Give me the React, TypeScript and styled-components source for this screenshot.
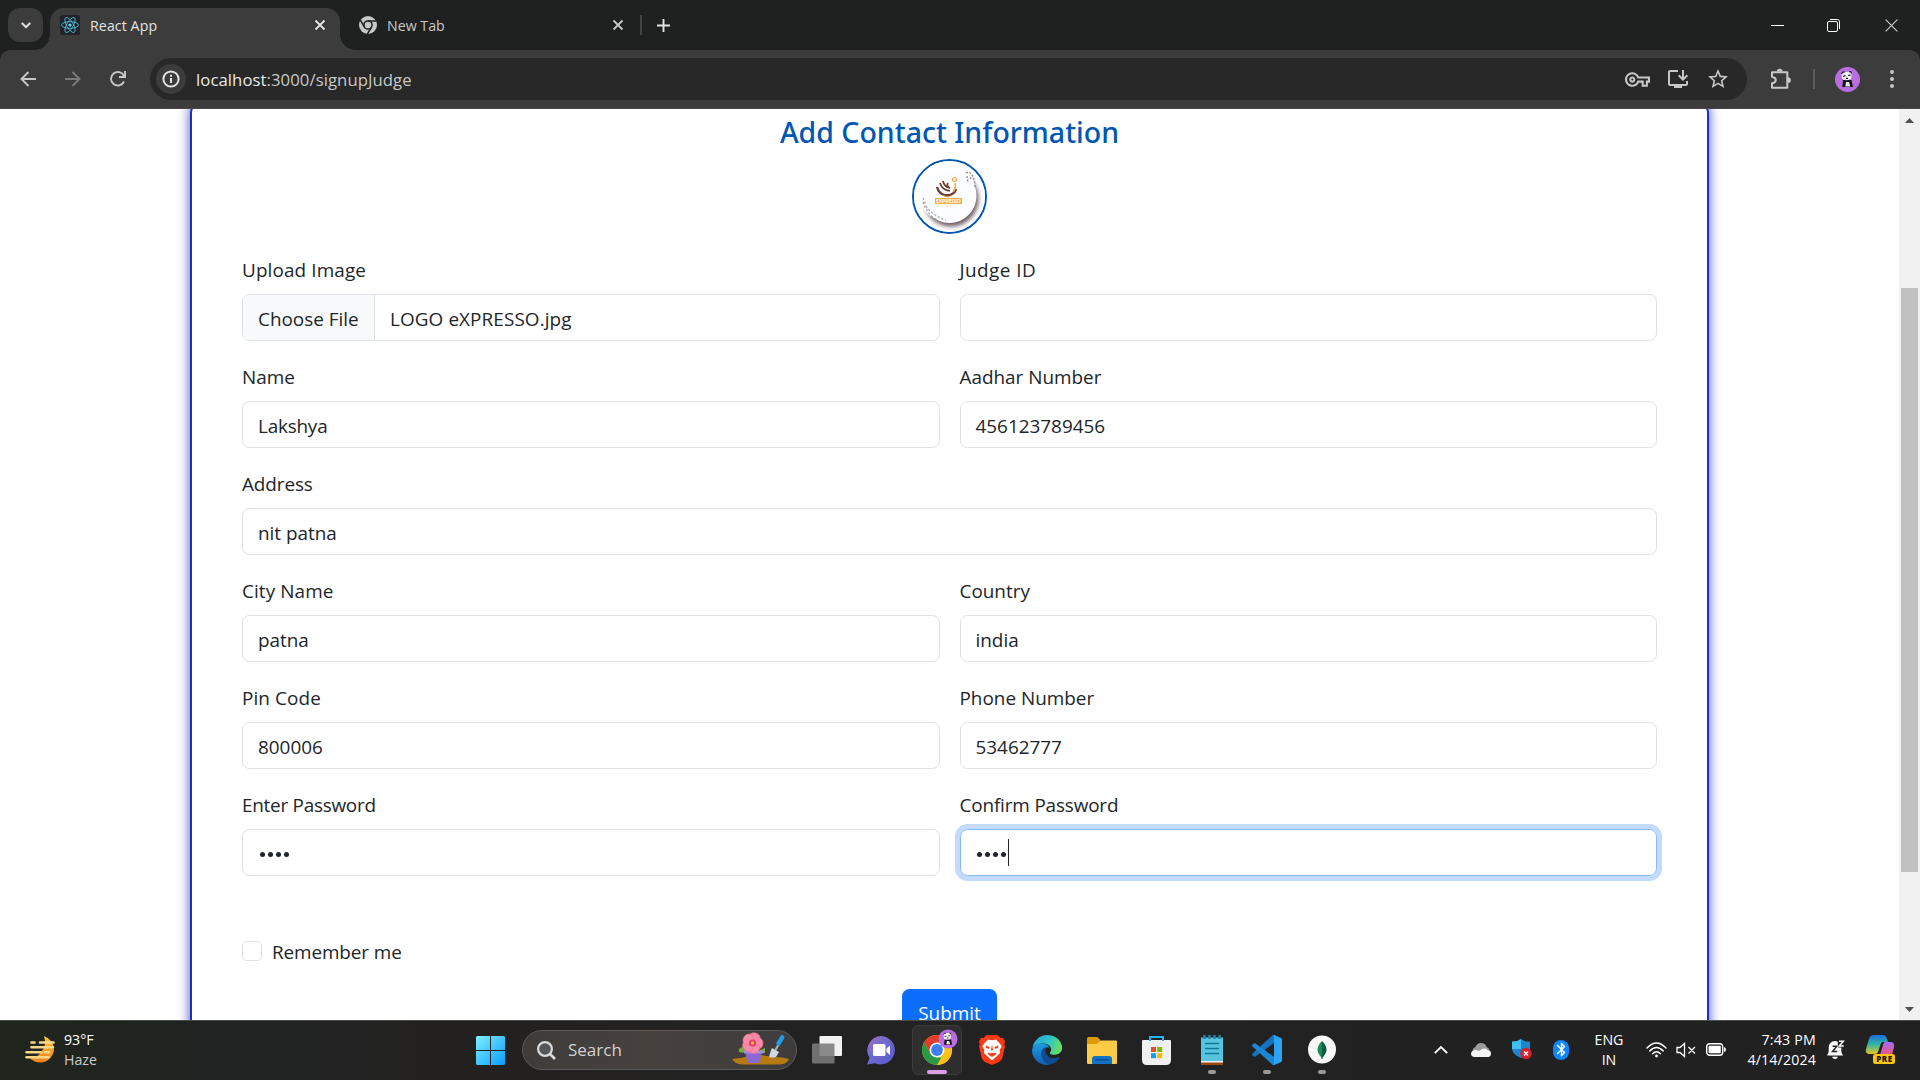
import React from "react";
import styled, { createGlobalStyle } from "styled-components";
import {
  MdOutlineVpnKey,
  MdOutlineInstallDesktop,
  MdStarBorder,
  MdBluetooth,
} from "react-icons/md";

const Global = createGlobalStyle`
  * { box-sizing: border-box; }
  body { margin: 0; overflow: hidden; font-family: "Open Sans", "Noto Sans", sans-serif; }
  svg { display: block; flex: none; overflow: visible; }
`;

const Screen = styled.div`
  width: 1920px;
  height: 1080px;
  display: flex;
  flex-direction: column;
  overflow: hidden;
  background: #fff;
`;

const Text = styled.span<{ $ls?: number }>`
  white-space: nowrap;
  letter-spacing: ${(p) => p.$ls ?? 0}px;
`;

/* ---------- browser tab strip ---------- */

const TabStrip = styled.div`
  height: 50px;
  flex: none;
  display: flex;
  align-items: flex-end;
  background: #1f2120;
  padding-left: 8px;
  color: #c7c7c7;
  font-size: 14.2px;
`;

const TabSearch = styled.div`
  width: 35px;
  height: 34px;
  margin-bottom: 8px;
  border-radius: 12px;
  background: #3c3c3c;
  display: grid;
  place-items: center;
  color: #e3e3e3;
`;

const Flare = styled.div<{ $side: "left" | "right" }>`
  width: 15px;
  height: 15px;
  margin-left: ${(p) => (p.$side === "left" ? -8 : 0)}px;
  background: radial-gradient(
    circle at ${(p) => (p.$side === "left" ? "0 0" : "100% 0")},
    transparent 14.5px,
    #3c3c3c 15px
  );
`;

const Tab = styled.div<{ $active?: boolean; $width: number }>`
  width: ${(p) => p.$width}px;
  height: 42px;
  padding: 0 ${(p) => (p.$active ? 15 : 8.5)}px 8px ${(p) => (p.$active ? 10 : 4)}px;
  border-radius: 14px 14px 0 0;
  background: ${(p) => (p.$active ? "#3c3c3c" : "transparent")};
  color: ${(p) => (p.$active ? "#e3e3e3" : "#c7c7c7")};
  display: flex;
  align-items: center;
  gap: 10px;
`;

const TabTitle = styled(Text)`
  flex: 1;
`;

const Favicon = styled.div`
  width: 20px;
  height: 20px;
  border-radius: 2px;
  background: #20232a;
  display: grid;
  place-items: center;
`;

const StripDivider = styled.div`
  width: 2px;
  height: 20px;
  margin: 0 15px 15px 9px;
  background: #444;
`;

const NewTab = styled.div`
  margin-bottom: 18.5px;
`;

const WindowControls = styled.div`
  margin-left: auto;
  height: 49px;
  display: flex;
  align-items: center;
  gap: 43px;
  padding-right: 22px;
`;

const CloseWindow = styled.div`
  margin-left: 2px;
`;

/* ---------- browser toolbar ---------- */

const ToolbarBack = styled.div`
  flex: none;
  background: #1f2120;
`;

const Toolbar = styled.div`
  height: 59px;
  background: #3c3c3c;
  border-radius: 10px 10px 0 0;
  border-bottom: 1px solid #4a4548;
  display: flex;
  align-items: center;
  color: #c7c7c7;
`;

const NavButtons = styled.div`
  width: 150px;
  display: flex;
  gap: 29px;
  padding-left: 20px;
`;

const UrlBar = styled.div`
  width: 1597px;
  height: 42px;
  border-radius: 21px;
  background: #282828;
  display: flex;
  align-items: center;
  padding: 0 17px 0 6px;
  font-size: 16.7px;
`;

const InfoBadge = styled.div`
  width: 30px;
  height: 30px;
  border-radius: 50%;
  background: #3c3c3c;
  display: grid;
  place-items: center;
  margin-right: 10px;
`;

const Host = styled.span`
  color: #e8e8e8;
`;

const UrlActions = styled.div`
  margin-left: auto;
  display: flex;
  align-items: center;
  gap: 16px;
`;

const ToolbarEnd = styled.div`
  flex: 1;
  display: flex;
  align-items: center;
  padding-left: 23px;
`;

const ToolDivider = styled.div`
  width: 2px;
  height: 20px;
  margin: 0 20px 0 21px;
  background: #5c5c5c;
`;

const MenuDots = styled.div`
  margin-left: 29px;
`;

/* ---------- page ---------- */

const Viewport = styled.div`
  height: 911px;
  flex: none;
  display: flex;
  overflow: hidden;
`;

const Page = styled.main`
  flex: 1;
  height: 911px;
  overflow: hidden;
  background: #fff;
  padding-left: 190px;
`;

const Card = styled.section`
  width: 1519px;
  height: 1000px;
  margin-top: -8px;
  padding: 12px 50px;
  border: 2px solid #1f2fb8;
  border-radius: 12px;
  box-shadow: 0 0 12px rgba(31, 47, 184, 0.85);
  display: flex;
  flex-direction: column;
  align-items: center;
  color: #212529;
  font-size: 18.9px;
  line-height: 30px;
`;

const Heading = styled.h1`
  margin: -1px 0 9px;
  font-family: "Noto Sans", "Open Sans", sans-serif;
  font-size: 28.5px;
  font-weight: 500;
  line-height: 36px;
  color: #0056b3;
  white-space: nowrap;
`;

const Avatar = styled.div`
  width: 75px;
  height: 75px;
  flex: none;
  border: 2px solid #0056b3;
  border-radius: 50%;
  overflow: hidden;
`;

const Grid = styled.div`
  width: 1415px;
  margin-top: 20px;
  display: grid;
  grid-template-columns: 1fr 1fr;
  gap: 20px;
`;

const Field = styled.div<{ $wide?: boolean }>`
  grid-column: ${(p) => (p.$wide ? "1 / -1" : "auto")};
  display: flex;
  flex-direction: column;
  gap: 9px;
  padding-top: 1px;
`;

const Control = styled.div<{ $focus?: boolean }>`
  height: 47px;
  border: 1px solid ${(p) => (p.$focus ? "#86b7fe" : "#dee2e6")};
  border-radius: 7.5px;
  box-shadow: ${(p) => (p.$focus ? "0 0 0 5px rgba(13,110,253,.25)" : "none")};
  padding: 2px 15px 0;
  display: flex;
  align-items: center;
  overflow: ${(p) => (p.$focus ? "visible" : "hidden")};
`;

const FileButton = styled.div`
  height: 49px;
  margin: -2px 15px 0 -15px;
  padding: 11px 15px 0;
  width: 132px;
  background: #f8f9fa;
  border-right: 1px solid #dee2e6;
`;

const Dots = styled.div`
  display: flex;
  gap: 3px;
  padding: 1px 1.5px 0 1.5px;
`;

const Dot = styled.i`
  width: 5px;
  height: 5px;
  border-radius: 50%;
  background: #212529;
`;

const Caret = styled.i`
  width: 1px;
  height: 27px;
  background: #212529;
  margin-bottom: 3px;
`;

const Remember = styled.div`
  width: 1415px;
  margin-top: 60px;
  display: flex;
  align-items: center;
  gap: 10px;
`;

const RememberLabel = styled(Text)`
  padding-top: 1px;
  margin-bottom: -1px;
`;

const Checkbox = styled.div`
  width: 20px;
  height: 20px;
  border: 1px solid #dee2e6;
  border-radius: 5px;
`;

const Submit = styled.div`
  width: 95px;
  height: 47px;
  margin-top: 23px;
  border-radius: 7.5px;
  background: #0d6efd;
  color: #fff;
  text-align: center;
  line-height: 49px;
`;

const Scrollbar = styled.div`
  width: 21px;
  background: #f1f1f1;
  display: flex;
  flex-direction: column;
  align-items: center;
  padding: 9px 0 8px;
`;

const Thumb = styled.div`
  width: 17px;
  height: 584px;
  margin: 165px 0 auto;
  background: #c1c1c1;
`;

/* ---------- taskbar ---------- */

const Taskbar = styled.footer`
  height: 60px;
  flex: none;
  border-top: 1px solid #4a4c4a;
  background: linear-gradient(90deg, #20251d 0, #202322 240px, #232120 480px, #222 800px, #212121 100%);
  display: flex;
  align-items: flex-start;
  color: #fff;
  font-size: 14.2px;
  line-height: 20px;
`;

const Weather = styled.div`
  width: 463px;
  height: 57px;
  padding-left: 25px;
  display: flex;
  gap: 9px;
  align-items: center;
`;

const Stack = styled.div<{ $align?: string }>`
  display: flex;
  flex-direction: column;
  align-items: ${(p) => p.$align ?? "flex-start"};
`;

const Muted = styled(Text)`
  color: #c9c9c9;
`;

const Slot = styled.div<{ $w?: number; $end?: boolean }>`
  width: ${(p) => p.$w ?? 55}px;
  height: ${(p) => (p.$w ? 57 : 58)}px;
  flex: none;
  display: grid;
  align-items: center;
  justify-items: ${(p) => (p.$end ? "end" : "center")};
  padding-right: ${(p) => (p.$end ? 5 : 0)}px;
`;

const SearchPill = styled.div`
  width: 275px;
  height: 40px;
  margin: 9px 2px 0 4px;
  border: 1px solid #5c5a58;
  border-radius: 20px;
  background: linear-gradient(90deg, #3e3c3a, #47413e 45%, #3e3d3c);
  display: flex;
  align-items: center;
  padding: 0 7px 0 14px;
  font-size: 17px;
  color: #d2d2d2;
`;

const SearchLabel = styled(Text)`
  margin-left: 12px;
  flex: 1;
`;

const AppTile = styled.div<{ $active?: boolean }>`
  width: 50px;
  height: 50px;
  border-radius: 6px;
  border: 1px solid ${(p) => (p.$active ? "#3c3c3c" : "transparent")};
  background: ${(p) => (p.$active ? "#2f2e2e" : "transparent")};
  display: flex;
  flex-direction: column;
  align-items: center;
  padding-top: 9px;
`;

const Indicator = styled.div<{ $active?: boolean }>`
  width: ${(p) => (p.$active ? 20 : 8)}px;
  height: 4px;
  border-radius: 2px;
  margin-top: 5px;
  background: ${(p) => (p.$active ? "#dc9fe6" : "#9a9a9a")};
`;

const Tray = styled.div`
  margin-left: auto;
  padding-right: 10px;
  display: flex;
`;

/* ---------- drawings ---------- */

const Cross = ({ size = 10, w = 1.8 }: { size?: number; w?: number }) => (
  <svg width={size} height={size} viewBox="0 0 10 10" stroke="currentColor" strokeWidth={w} fill="none">
    <path d="M.5.5l9 9M9.5.5l-9 9" />
  </svg>
);

const ReactLogo = () => (
  <svg width="18" height="18" viewBox="-12 -12 24 24" fill="none" stroke="#53c1de" strokeWidth="1.1">
    <circle r="2.1" fill="#61dafb" stroke="none" />
    <ellipse rx="11.3" ry="4.4" />
    <ellipse rx="11.3" ry="4.4" transform="rotate(60)" />
    <ellipse rx="11.3" ry="4.4" transform="rotate(120)" />
  </svg>
);

const MonoChrome = () => (
  <svg width="18" height="18" viewBox="0 0 18 18">
    <circle cx="9" cy="9" r="9" fill="#c7c7c7" />
    <circle cx="9" cy="9" r="4.1" fill="none" stroke="#1f2120" strokeWidth="1.5" />
    <g stroke="#1f2120" strokeWidth="1.5">
      <path d="M9 5H17.5M12.5 11L8.2 18.4M5.5 11L1.2 3.8" />
    </g>
  </svg>
);

const ExtensionIcon = () => (
  <svg width="22" height="21" viewBox="0 0 22 21" fill="#c7c7c7">
    <path
      d="M2 3.200H17.300V18.800H2V14.300Q5.800 13.500 5.800 11T2 7.700z"
      fill="none"
      stroke="#c7c7c7"
      strokeWidth="2"
      strokeLinejoin="round"
    />
    <path d="M6.800 2.500a2.900 2.700 0 0 1 5.800 0zM18 8.200a2.900 2.900 0 0 1 0 5.800z" />
  </svg>
);

const Panda = ({ size }: { size: number }) => (
  <svg width={size} height={size} viewBox="0 0 25 25">
    <circle cx="12.5" cy="12.5" r="12.5" fill="#b86ee0" />
    <path d="M8 13h8.5l1.5 7H7.3z" fill="#161318" />
    <path d="M11 15h3l1.4 4.5h-5z" fill="#e9e6ea" />
    <path d="M6.6 6.2Q8 4.2 9.6 5l4-.3q2.2-1 2.7 1l.2 4.800q-.4 2.400-4 2.600-5.200.300-5.700-2.400z" fill="#efeff0" />
    <path d="M6.500 6.800l1.500-2 1.800.4M14 4.600l2 .2.400 1.800M8 9.300l2.500-.6M13 8.500l2.500-.3M11 11.300h2" stroke="#222" strokeWidth="1.200" fill="none" />
  </svg>
);

const ExpressoLogo = () => (
  <svg width="71" height="71" viewBox="0 0 71 71">
    <defs>
      <filter id="soft" x="-30%" y="-30%" width="160%" height="160%">
        <feGaussianBlur stdDeviation="2" />
      </filter>
    </defs>
    <rect width="71" height="71" fill="#fff" />
    <circle cx="37" cy="38" r="27.500" fill="#57424a" filter="url(#soft)" opacity=".85" />
    <circle cx="32" cy="30" r="29.500" fill="#fff" />
    <circle cx="35.500" cy="35" r="27" fill="#fbfdff" />
    <path d="M52 12q4-2 6 2 3 5 3 12M53 15l1 7M57 16l-1 3" stroke="#9d9196" strokeWidth="1.500" strokeDasharray="2 1.500" fill="none" />
    <path d="M9 41q4 12 14 18M12 45q7 10 20 14M9 37l3 7" stroke="#a89da1" strokeWidth="1.300" strokeDasharray="2 2" fill="none" />
    <path d="M23 26q2 8 10 8.500 8-1 9-6.500" stroke="#6b3a2c" strokeWidth="2.300" fill="none" />
    <path d="M26 22q2 7 10 8M29 20q1 6 7 7M34 22q-2 3 2 5" stroke="#6b3a2c" strokeWidth="1.700" fill="none" />
    <path d="M39 31q3-3 2-9" stroke="#f0a94a" strokeWidth="1.500" fill="none" />
    <circle cx="40.500" cy="18.500" r="2" stroke="#f0a94a" strokeWidth="1.200" fill="none" />
    <path d="M29 34.500q5 3 9 0" stroke="#f0a94a" strokeWidth="1" fill="none" />
    <rect x="21" y="37" width="27" height="6" fill="#f2ac4c" />
    <text x="34.500" y="41.800" textAnchor="middle" fontSize="5.500" fontFamily="Open Sans, sans-serif" fontWeight="700" fill="#fff7ea" textLength="25">
      EXPRESSO
    </text>
    <path d="M23 45h2M32 45h2M36 45h1" stroke="#f2c98a" strokeWidth=".8" />
  </svg>
);

const HazeIcon = () => (
  <svg width="30" height="28" viewBox="0 0 30 28">
    <defs>
      <linearGradient id="sun" x1="0" y1="0" x2="0" y2="1">
        <stop offset="0" stopColor="#f7c33c" />
        <stop offset="1" stopColor="#f0801c" />
      </linearGradient>
    </defs>
    <path d="M19 0q10 4 10 14a14 13.500 0 0 1-26 6q9 3 13-4 6-6 3-16z" fill="url(#sun)" />
    <path d="M6.500 6.500h3M15 6.500h13.500M6.500 11.200H28M1.500 16.200h15M20 16.200h4M1.500 21.200h22" stroke="#f6d786" strokeWidth="2.600" strokeLinecap="round" />
  </svg>
);

const WindowsLogo = () => (
  <svg width="29" height="29" viewBox="0 0 29 29">
    <defs>
      <linearGradient id="win" x1="0" y1="0" x2="29" y2="29" gradientUnits="userSpaceOnUse">
        <stop offset="0" stopColor="#7df0ff" />
        <stop offset="1" stopColor="#0a9bff" />
      </linearGradient>
    </defs>
    <path d="M1 0h13v14H0V1zM15 0h13l1 1v13H15zM0 15h14v14H1l-1-1zM15 15h14v13l-1 1H15z" fill="url(#win)" />
  </svg>
);

const SearchGlass = () => (
  <svg width="19" height="19" viewBox="0 0 19 19" fill="none" stroke="#d8dadb" strokeWidth="2.200">
    <circle cx="8" cy="8" r="6.900" fill="#55565a" />
    <path d="M13 13l5 5" strokeWidth="2.600" />
  </svg>
);

const Flower = () => {
  const petals = [22, 94, 166, 238, 310];
  return (
    <svg width="57" height="30" viewBox="0 0 57 30">
      <path d="M0 24q10-1 13-2 13-4 27 0 12 0 17 2-2 5-9 5.500H10Q3 29 0 24z" fill="#b67a10" />
      <path d="M7 17q-1-5 5-5l4 3q-3 4-9 2zM33 13l-5 2q-1 4 5 3z" fill="#6fae3a" />
      <path d="M13 16h17l-2.500 12h-12z" fill="#8a68d4" />
      <path d="M12 15.500h19v3H12z" fill="#a58ae6" />
      {petals.map((a) => (
        <ellipse key={a} cx="20.500" cy="2.500" rx="5.800" ry="5" fill="#f88ba8" stroke="#ee6c90" strokeWidth=".6" transform={`rotate(${a} 20.500 8)`} />
      ))}
      <circle cx="20.500" cy="8" r="3.600" fill="#e23d63" />
      <circle cx="20.500" cy="8" r="1.800" fill="#f5b13d" />
      <path d="M40 13l7 4-3 5q-4 1-7 0 1-5 3-9z" fill="#cfd8de" />
      <path d="M43.500 15l5-9" stroke="#aab4bb" strokeWidth="2" />
      <path d="M46.500 8.500l3.700-6.200" stroke="#1f9bea" strokeWidth="4.400" strokeLinecap="round" />
    </svg>
  );
};

const TaskView = () => (
  <svg width="30" height="28" viewBox="0 0 30 28">
    <rect x="7.500" y="0" width="22.500" height="20" rx="1" fill="#f1f1f1" />
    <rect x="0" y="7.500" width="22.500" height="20" rx="1" fill="#7b7b7b" opacity=".88" />
  </svg>
);

const ChatIcon = () => (
  <svg width="29" height="29" viewBox="0 0 29 29">
    <defs>
      <linearGradient id="chat" x1="0" y1="0" x2="1" y2="1">
        <stop offset="0" stopColor="#a071c4" />
        <stop offset=".45" stopColor="#6d6bd0" />
        <stop offset="1" stopColor="#5657c9" />
      </linearGradient>
    </defs>
    <path d="M14.500 0A14.200 14.200 0 1 1 8 27.200L0 28.500 2.600 22A14.300 14.300 0 0 1 14.500 0z" fill="url(#chat)" />
    <rect x="6" y="8" width="12.500" height="12" rx="1.500" fill="#fff" />
    <path d="M19.500 12.500l3.500-3v9.500l-3.500-3z" fill="#fff" />
  </svg>
);

const ChromeIcon = () => (
  <svg width="30" height="30" viewBox="0 0 30 30">
    <circle cx="15" cy="15" r="15" fill="#fbc116" />
    <path d="M15 0a15 15 0 0 1 13 7.500H15L8.500 18.750 2 7.500A15 15 0 0 1 15 0z" fill="#e33b2e" />
    <path d="M2 7.500L8.500 18.750 15 22.500h6.500L15 30A15 15 0 0 1 2 7.500z" fill="#2a9a47" />
    <path d="M28 7.500A15 15 0 0 1 15 30l6.500-11.250L21 9z" fill="#fbc116" />
    <path d="M15 7.500h13L27 6H14z" fill="#e33b2e" />
    <circle cx="15" cy="15" r="7.500" fill="#fff" />
    <circle cx="15" cy="15" r="5.900" fill="#3d7fee" />
    <g transform="translate(16.500 -5.500)">
      <Panda size={19} />
    </g>
  </svg>
);

const BraveIcon = () => (
  <svg width="26" height="30" viewBox="0 0 26 30">
    <path d="M7.500 0h11l3 3 2.500-.3 2 4-.8 2.300.8 2.500-3 12.500-3 3L13 30l-7-3-3-3L0 11.500.8 9 0 6.700l2-4 2.500.3z" fill="#fb3a14" />
    <path
      d="M9 4.500l4 .7 4-.7 3.500 3.500 2.300 3.500-2 3 .2 3.500-3.500 3.500-4.500 4-4.500-4L5 18l.2-3.500-2-3L5.500 8z"
      fill="#fff"
    />
    <path d="M6.500 10.500l4 1.500-.5 1.800-2.800-.6zM19.500 10.500l-4 1.500.5 1.800 2.800-.6zM13 9.500l1 5.500-1 .8-1-.8zM8.500 17.500l3.300 1L13 17.500l1.200 1 3.300-1-1 2.200L13 22l-3.500-2.300z" fill="#fb3a14" />
  </svg>
);

const EdgeIcon = () => (
  <svg width="30" height="30" viewBox="0 0 30 30">
    <defs>
      <linearGradient id="eg1" x1="0" y1=".3" x2="1" y2=".6">
        <stop offset="0" stopColor="#2aa5e0" />
        <stop offset=".5" stopColor="#2cc3c5" />
        <stop offset="1" stopColor="#6be05a" />
      </linearGradient>
      <linearGradient id="eg2" x1="0" y1="0" x2="0" y2="1">
        <stop offset="0" stopColor="#1b9de2" />
        <stop offset="1" stopColor="#0f5fb5" />
      </linearGradient>
    </defs>
    <path d="M.5 12.500A15 15 0 0 1 15 0q9 0 13.500 7 3 6 .5 9.500-3 4-9 3-3-.5-2-2 2-2.500.5-5.500Q16 8.500 11 8.500 4 8.500.5 12.500z" fill="url(#eg1)" />
    <path d="M0 15Q1 9 8 8.500q7 0 9.500 4Q11 11.500 10 17q-.5 8 8 12-1 1-4 .9A15 15 0 0 1 0 15z" fill="url(#eg2)" />
    <path d="M13.500 12.500Q8 14.500 9.500 21q2.500 8 8.500 8.500 6-1 9.500-6.500.5-1-.8-.7Q19 25 15 20q-2.500-4-.500-7.500z" fill="#124b8f" />
  </svg>
);

const FolderIcon = () => (
  <svg width="30" height="27" viewBox="0 0 30 27">
    <path d="M0 1.500Q0 0 1.500 0H10q1.500 0 3 3.500H0z M0 2h13v6H0z" fill="#dd9b09" />
    <path d="M0 7h9.500l4-3.500H29q1 0 1 1V26q0 1-1 1H1q-1 0-1-1z" fill="#fdcb45" />
    <path d="M5 27v-5q0-3 3-3h14q3 0 3 3v5z" fill="#1173c7" />
    <path d="M8.500 22.800h13" stroke="#0b4f95" strokeWidth="1.500" />
  </svg>
);

const StoreIcon = () => (
  <svg width="29" height="29" viewBox="0 0 29 29">
    <path d="M8 5V1h13v4" stroke="#26b4ee" strokeWidth="2" fill="none" />
    <path d="M0 5q0-1 1-1h27q1 0 1 1v19q0 5-5 5H5q-5 0-5-5z" fill="#f0f0f0" />
    <path d="M8 5V2M21 5V2" stroke="#26b4ee" strokeWidth="2" />
    <path d="M9 11h5v5H9z" fill="#e94f24" />
    <path d="M15.200 11h5v5h-5z" fill="#7fb900" />
    <path d="M9 17.200h5v5H9z" fill="#06a4ee" />
    <path d="M15.200 17.200h5v5h-5z" fill="#ffb901" />
  </svg>
);

const NotepadIcon = () => (
  <svg width="22" height="30" viewBox="0 0 22 30">
    <path d="M0 26h22v4H0z" fill="#9a4a14" />
    <path d="M0 25h22v2.500H0z" fill="#f4f4f4" />
    <path d="M0 2.500h22V26H0z" fill="#58c3de" />
    <path d="M4 8.500h14M4 13.500h14M4 18.500h14" stroke="#10779c" strokeWidth="1.600" />
    <path d="M3.500 0v4M8.500 0v4M13.500 0v4M18.500 0v4" stroke="#1b87ab" strokeWidth="2.400" />
  </svg>
);

const CodeIcon = () => (
  <svg width="30" height="30" viewBox="0 0 30 30">
    <path d="M22 8L3.500 21.500Q2.500 22 1.800 21.500L.4 20.200Q-.3 19.300.5 18.500L20.800 0 22.500.5z" fill="#1672bd" />
    <path d="M22 22L3.500 8.500Q2.500 8 1.800 8.500L.4 9.800Q-.3 10.700.5 11.500L20.800 30l1.700-.5z" fill="#1b87d3" />
    <path d="M20.800 0l1.500 0 6.700 3q1 .5 1 1.500v21q0 1-1 1.500l-6.700 3-1.500 0q1.200-.5 1.200-2V2q0-1.500-1.200-2z" fill="#2ba3f0" />
  </svg>
);

const MongoIcon = () => (
  <svg width="28" height="30" viewBox="0 0 28 30">
    <circle cx="14" cy="14.500" r="14" fill="#f7f7f7" />
    <path d="M14 6q-9 8.500 0 17z" fill="#1c8a5b" />
    <path d="M14 6q9 8.500 0 17z" fill="#0b5c40" />
    <path d="M14 20v4" stroke="#0b5c40" strokeWidth="1" />
  </svg>
);

const ShieldIcon = () => (
  <svg width="20" height="21" viewBox="0 0 20 21">
    <path d="M9 0q4 3 9 2.500V10q-1 6-9 9-8-3-9-9V2.500Q5 3 9 0z" fill="#1d86cf" />
    <path d="M9 0v10H0V2.500Q5 3 9 0z" fill="#41bfee" />
    <circle cx="14" cy="14.500" r="5.700" fill="#d91f2c" />
    <path d="M12 12.500l4 4M16 12.500l-4 4" stroke="#fff" strokeWidth="1.500" />
  </svg>
);

const CloudIcon = () => (
  <svg width="20" height="14" viewBox="0 0 20 14">
    <path d="M2 9Q1 5 4.500 4 6 0 10 0q4.500 0 5.500 4 2 .5 3 2.500L10 11z" fill="#9c9c9c" />
    <path d="M3 14q-3-.5-3-3.500Q.3 7.500 4 7q2.500 0 4 1l3-2q4-1.500 5.500 1 3.500.2 3.500 3.500T17 14z" fill="#f4f4f4" />
  </svg>
);

const BluetoothBadge = styled.div`
  width: 16px;
  height: 20px;
  border-radius: 8px;
  background: #0f85fa;
  display: grid;
  place-items: center;
`;

const WifiIcon = () => (
  <svg width="21" height="16" viewBox="0 0 21 16" fill="none" stroke="#fff" strokeWidth="1.500" strokeLinecap="round">
    <path d="M1 6Q10.500-4 20 6M3.800 9q6.700-7 13.400 0M6.600 11.800q3.900-4.200 7.800 0" />
    <circle cx="10.500" cy="14" r="1.400" fill="#fff" stroke="none" />
  </svg>
);

const MuteIcon = () => (
  <svg width="20" height="16" viewBox="0 0 20 16" fill="none" stroke="#fff" strokeWidth="1.300">
    <path d="M1 5.500h3L8.500 1.500v13L4 10.500H1zM12.500 5l6.500 6.500M19 5l-6.500 6.500" />
  </svg>
);

const BatteryIcon = () => (
  <svg width="20" height="13" viewBox="0 0 20 13">
    <rect x=".7" y=".7" width="16" height="11.600" rx="3" fill="none" stroke="#fff" strokeWidth="1.400" />
    <rect x="2.600" y="2.700" width="12.200" height="7.600" rx="1" fill="#fff" />
    <path d="M18 4q2 .5 2 2.500T18 9z" fill="#fff" />
  </svg>
);

const BellIcon = () => (
  <svg width="17" height="20" viewBox="0 0 17 20">
    <path d="M8 1a6.300 6.300 0 0 1 6.300 6.300v4.700l1.700 3.500H0l1.700-3.500V7.300A6.300 6.300 0 0 1 8 1zM5 16.800h6q-1 2.200-3 2.200t-3-2.200z" fill="#fff" />
    <path d="M10.500-.5h7.500v8h-7z" fill="#222" />
    <path d="M5.500 6.200h4.300L5.500 11.500h4.800" stroke="#222" strokeWidth="1.500" fill="none" />
    <path d="M12 1.200h4.300L12.300 6h4.400" stroke="#fff" strokeWidth="1.500" fill="none" />
  </svg>
);

const CopilotIcon = () => (
  <svg width="29" height="29" viewBox="0 0 29 29">
    <defs>
      <linearGradient id="cp1" x1="0" y1="0" x2="0" y2="1">
        <stop offset="0" stopColor="#1b6fe0" />
        <stop offset=".5" stopColor="#33b5a0" />
        <stop offset="1" stopColor="#e5c41e" />
      </linearGradient>
      <linearGradient id="cp2" x1="0" y1="0" x2="0" y2="1">
        <stop offset="0" stopColor="#a06af0" />
        <stop offset="1" stopColor="#f0567e" />
      </linearGradient>
    </defs>
    <path d="M8 0h9q3 0 4 4l1 3h-5q-2 0-3 4l-2 6q-.5 2-3 2H3q-4-.5-3-5L3 4q1-4 5-4z" fill="url(#cp1)" />
    <path d="M19 7h6q4 .5 3 5l-2 8H14l3-10q.5-3 2-3z" fill="url(#cp2)" />
    <rect x="7" y="19" width="22" height="10" rx="2.500" fill="#fdc50f" />
    <text x="18.200" y="27" textAnchor="middle" fontSize="8" fontWeight="800" fontFamily="Open Sans, sans-serif" fill="#1c1600" textLength="16">
      PRE
    </text>
  </svg>
);

/* ---------- composition ---------- */

type FieldSpec = { label: string; value?: string; wide?: boolean; kind?: "file" | "password"; focus?: boolean; ls?: number; vls?: number };

const fields: FieldSpec[] = [
  { label: "Upload Image", value: "LOGO eXPRESSO.jpg", kind: "file", ls: 0.12, vls: 0.1 },
  { label: "Judge ID", ls: 0.45 },
  { label: "Name", value: "Lakshya", vls: -0.2 },
  { label: "Aadhar Number", value: "456123789456" },
  { label: "Address", value: "nit patna", wide: true, ls: -0.1 },
  { label: "City Name", value: "patna", ls: 0.1 },
  { label: "Country", value: "india" },
  { label: "Pin Code", value: "800006", ls: 0.1 },
  { label: "Phone Number", value: "53462777" },
  { label: "Enter Password", kind: "password", ls: -0.25 },
  { label: "Confirm Password", kind: "password", focus: true, ls: -0.15 },
];

const FormField = ({ label, value, wide, kind, focus, ls, vls }: FieldSpec) => (
  <Field $wide={wide}>
    <Text $ls={ls}>{label}</Text>
    <Control $focus={focus}>
      {kind === "file" && (
        <FileButton>
          <Text>Choose File</Text>
        </FileButton>
      )}
      {kind === "password" ? (
        <Dots>
          <Dot />
          <Dot />
          <Dot />
          <Dot />
        </Dots>
      ) : (
        <Text $ls={vls}>{value}</Text>
      )}
      {focus && <Caret />}
    </Control>
  </Field>
);

const apps: { name: string; icon: React.ReactNode; state?: "active" | "open" }[] = [
  { name: "chrome", icon: <ChromeIcon />, state: "active" },
  { name: "brave", icon: <BraveIcon /> },
  { name: "edge", icon: <EdgeIcon /> },
  { name: "files", icon: <FolderIcon /> },
  { name: "store", icon: <StoreIcon /> },
  { name: "notepad", icon: <NotepadIcon />, state: "open" },
  { name: "code", icon: <CodeIcon />, state: "open" },
  { name: "mongo", icon: <MongoIcon />, state: "open" },
];

const IconBox = styled.div`
  height: 30px;
  display: grid;
  place-items: center;
`;

export default function App() {
  return (
    <Screen>
      <Global />
      <TabStrip>
        <TabSearch>
          <svg width="10" height="7" viewBox="0 0 10 7" fill="none" stroke="currentColor" strokeWidth="2">
            <path d="M.8 1L5 5.200 9.200 1" />
          </svg>
        </TabSearch>
        <Flare $side="left" />
        <Tab $active $width={290}>
          <Favicon>
            <ReactLogo />
          </Favicon>
          <TabTitle $ls={0.08}>React App</TabTitle>
          <Cross />
        </Tab>
        <Flare $side="right" />
        <Tab $width={276}>
          <MonoChrome />
          <TabTitle>New Tab</TabTitle>
          <Cross />
        </Tab>
        <StripDivider />
        <NewTab>
          <svg width="13" height="13" viewBox="0 0 13 13" stroke="#e3e3e3" strokeWidth="1.900">
            <path d="M6.500 0v13M0 6.500h13" />
          </svg>
        </NewTab>
        <WindowControls>
          <svg width="13" height="13" viewBox="0 0 13 13" stroke="#fff">
            <path d="M0 6.500h13" />
          </svg>
          <svg width="13" height="13" viewBox="0 0 13 13" stroke="#fff" fill="none">
            <rect x=".5" y="2.500" width="10" height="10" rx="1.500" />
            <path d="M3 .5h7.500q2 0 2 2V10" />
          </svg>
          <CloseWindow>
            <Cross size={13} w={0.9} />
          </CloseWindow>
        </WindowControls>
      </TabStrip>

      <ToolbarBack>
        <Toolbar>
          <NavButtons>
            <svg width="16" height="16" viewBox="0 0 16 16" fill="none" stroke="#c7c7c7" strokeWidth="1.900">
              <path d="M16 8H2M8.500 1L1.500 8l7 7" />
            </svg>
            <svg width="16" height="16" viewBox="0 0 16 16" fill="none" stroke="#7a7a7a" strokeWidth="1.900">
              <path d="M0 8h14M7.500 1l7 7-7 7" />
            </svg>
            <svg width="16" height="16" viewBox="0 0 16 16" fill="none" stroke="#c7c7c7" strokeWidth="1.900">
              <path d="M14 10.500A6.800 6.800 0 1 1 14 5M15 0v6H9" />
            </svg>
          </NavButtons>
          <UrlBar>
            <InfoBadge>
              <svg width="18" height="18" viewBox="0 0 18 18" fill="none" stroke="#e3e3e3" strokeWidth="2">
                <circle cx="9" cy="9" r="7.600" />
                <path d="M9 8v5M9 4.700v2" />
              </svg>
            </InfoBadge>
            <Text $ls={0.07}>
              <Host>localhost</Host>:3000/signupJudge
            </Text>
            <UrlActions>
              <MdOutlineVpnKey size={25} />
              <MdOutlineInstallDesktop size={24} />
              <MdStarBorder size={24} />
            </UrlActions>
          </UrlBar>
          <ToolbarEnd>
            <ExtensionIcon />
            <ToolDivider />
            <Panda size={25} />
            <MenuDots>
              <svg width="6" height="18" viewBox="0 0 6 18" fill="#c7c7c7">
                <circle cx="3" cy="2" r="2" />
                <circle cx="3" cy="9" r="2" />
                <circle cx="3" cy="16" r="2" />
              </svg>
            </MenuDots>
          </ToolbarEnd>
        </Toolbar>
      </ToolbarBack>

      <Viewport>
        <Page>
          <Card>
            <Heading>Add Contact Information</Heading>
            <Avatar>
              <ExpressoLogo />
            </Avatar>
            <Grid>
              {fields.map((f) => (
                <FormField key={f.label} {...f} />
              ))}
            </Grid>
            <Remember>
              <Checkbox />
              <RememberLabel $ls={-0.1}>Remember me</RememberLabel>
            </Remember>
            <Submit>
              <Text>Submit</Text>
            </Submit>
          </Card>
        </Page>
        <Scrollbar>
          <svg width="9" height="5" viewBox="0 0 9 5" fill="#505050">
            <path d="M0 5L4.500 0 9 5z" />
          </svg>
          <Thumb />
          <svg width="9" height="5" viewBox="0 0 9 5" fill="#505050">
            <path d="M0 0h9L4.500 5z" />
          </svg>
        </Scrollbar>
      </Viewport>

      <Taskbar>
        <Weather>
          <HazeIcon />
          <Stack>
            <Text>93°F</Text>
            <Muted>Haze</Muted>
          </Stack>
        </Weather>
        <Slot>
          <WindowsLogo />
        </Slot>
        <SearchPill>
          <SearchGlass />
          <SearchLabel>Search</SearchLabel>
          <Flower />
        </SearchPill>
        <Slot>
          <TaskView />
        </Slot>
        <Slot>
          <ChatIcon />
        </Slot>
        {apps.map((a) => (
          <Slot key={a.name}>
            <AppTile $active={a.state === "active"}>
              <IconBox>{a.icon}</IconBox>
              {a.state && <Indicator $active={a.state === "active"} />}
            </AppTile>
          </Slot>
        ))}
        <Tray>
          <Slot $w={46}>
            <svg width="14" height="8" viewBox="0 0 14 8" fill="none" stroke="#fff" strokeWidth="1.900">
              <path d="M.8 7.200L7 1l6.200 6.200" />
            </svg>
          </Slot>
          <Slot $w={34}>
            <CloudIcon />
          </Slot>
          <Slot $w={47}>
            <ShieldIcon />
          </Slot>
          <Slot $w={32}>
            <BluetoothBadge>
              <MdBluetooth size={17} />
            </BluetoothBadge>
          </Slot>
          <Slot $w={64}>
            <Stack $align="center">
              <Text>ENG</Text>
              <Text>IN</Text>
            </Stack>
          </Slot>
          <Slot $w={30}>
            <WifiIcon />
          </Slot>
          <Slot $w={30}>
            <MuteIcon />
          </Slot>
          <Slot $w={30}>
            <BatteryIcon />
          </Slot>
          <Slot $w={90} $end>
            <Stack $align="flex-end">
              <Text $ls={0.2}>7:43 PM</Text>
              <Text $ls={0.15}>4/14/2024</Text>
            </Stack>
          </Slot>
          <Slot $w={29}>
            <BellIcon />
          </Slot>
          <Slot $w={60}>
            <CopilotIcon />
          </Slot>
        </Tray>
      </Taskbar>
    </Screen>
  );
}
